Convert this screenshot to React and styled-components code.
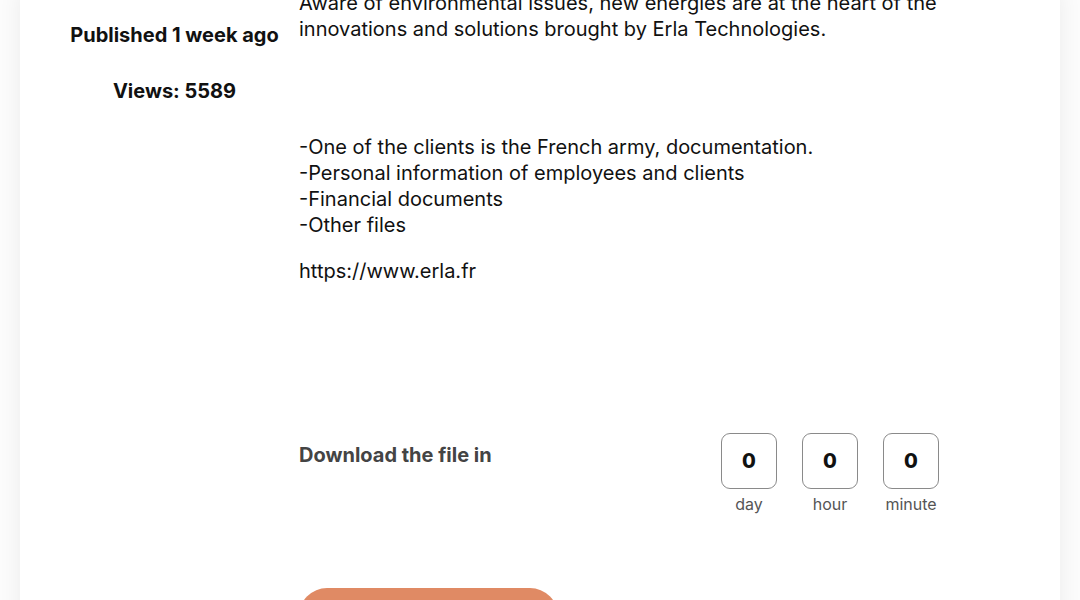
import React from "react";
import styled, { createGlobalStyle } from "styled-components";

const Global = createGlobalStyle`
  html, body { margin: 0; padding: 0; background: #fcfcfc; }
  body { font-family: Inter, "Noto Sans", sans-serif; color: #111; overflow: hidden; }
`;

const Page = styled.div`
  width: 1080px;
  height: 600px;
  overflow: hidden;
  background: #fcfcfc;
`;

const Card = styled.div`
  margin: -10px 20px 0 20px;
  background: #fff;
  box-shadow: 0 0 22px rgba(0, 0, 0, 0.07);
  display: grid;
  grid-template-columns: 229px 640px;
  column-gap: 10px;
  padding: 0 121px 60px 40px;
  min-height: 700px;
`;

const Side = styled.aside`
  display: flex;
  flex-direction: column;
  align-items: center;
  padding-top: 32px;
  gap: 30px;
`;

const Meta = styled.div`
  font-size: 20px;
  font-weight: 700;
  line-height: 26px;
  color: #111;
  white-space: nowrap;
`;

const Content = styled.main`
  display: flex;
  flex-direction: column;
`;

const Para = styled.p`
  margin: 0 0 ${(p) => p.$gap || 0}px 0;
  font-size: 20px;
  line-height: 26px;
  color: #111;
`;

const DownloadRow = styled.div`
  margin-top: 149px;
  display: flex;
  justify-content: space-between;
  align-items: flex-start;
`;

const DownloadLabel = styled.div`
  font-size: 20px;
  font-weight: 700;
  color: #444;
  line-height: 26px;
  margin-top: 9px;
`;

const Countdown = styled.div`
  display: flex;
  gap: 25px;
`;

const Unit = styled.div`
  display: flex;
  flex-direction: column;
  align-items: center;
  width: 56px;
`;

const Box = styled.div`
  width: 56px;
  height: 56px;
  box-sizing: border-box;
  border: 1px solid #8a8a8a;
  border-radius: 9px;
  display: flex;
  align-items: center;
  justify-content: center;
  font-size: 20px;
  font-weight: 800;
  color: #111;
`;

const UnitLabel = styled.div`
  margin-top: 5px;
  font-size: 16px;
  line-height: 20px;
  color: #555;
  white-space: nowrap;
`;

const Button = styled.button`
  margin-top: 74px;
  width: 259px;
  height: 56px;
  border: none;
  border-radius: 28px;
  background: #e08a64;
  color: #fff;
  font-family: Inter, sans-serif;
  font-size: 18px;
  font-weight: 700;
`;

const units = ["day", "hour", "minute"];

export default function App() {
  return (
    <Page>
      <Global />
      <Card>
        <Side>
          <Meta>Published 1 week ago</Meta>
          <Meta>Views: 5589</Meta>
        </Side>
        <Content>
          <Para $gap={92}>
            Aware of environmental issues, new energies are at the heart of the
            innovations and solutions brought by Erla Technologies.
          </Para>
          <Para $gap={20}>
            -One of the clients is the French army, documentation.
            <br />
            -Personal information of employees and clients
            <br />
            -Financial documents
            <br />
            -Other files
          </Para>
          <Para>https://www.erla.fr</Para>
          <DownloadRow>
            <DownloadLabel>Download the file in</DownloadLabel>
            <Countdown>
              {units.map((u) => (
                <Unit key={u}>
                  <Box>0</Box>
                  <UnitLabel>{u}</UnitLabel>
                </Unit>
              ))}
            </Countdown>
          </DownloadRow>
          <Button>Download</Button>
        </Content>
      </Card>
    </Page>
  );
}
